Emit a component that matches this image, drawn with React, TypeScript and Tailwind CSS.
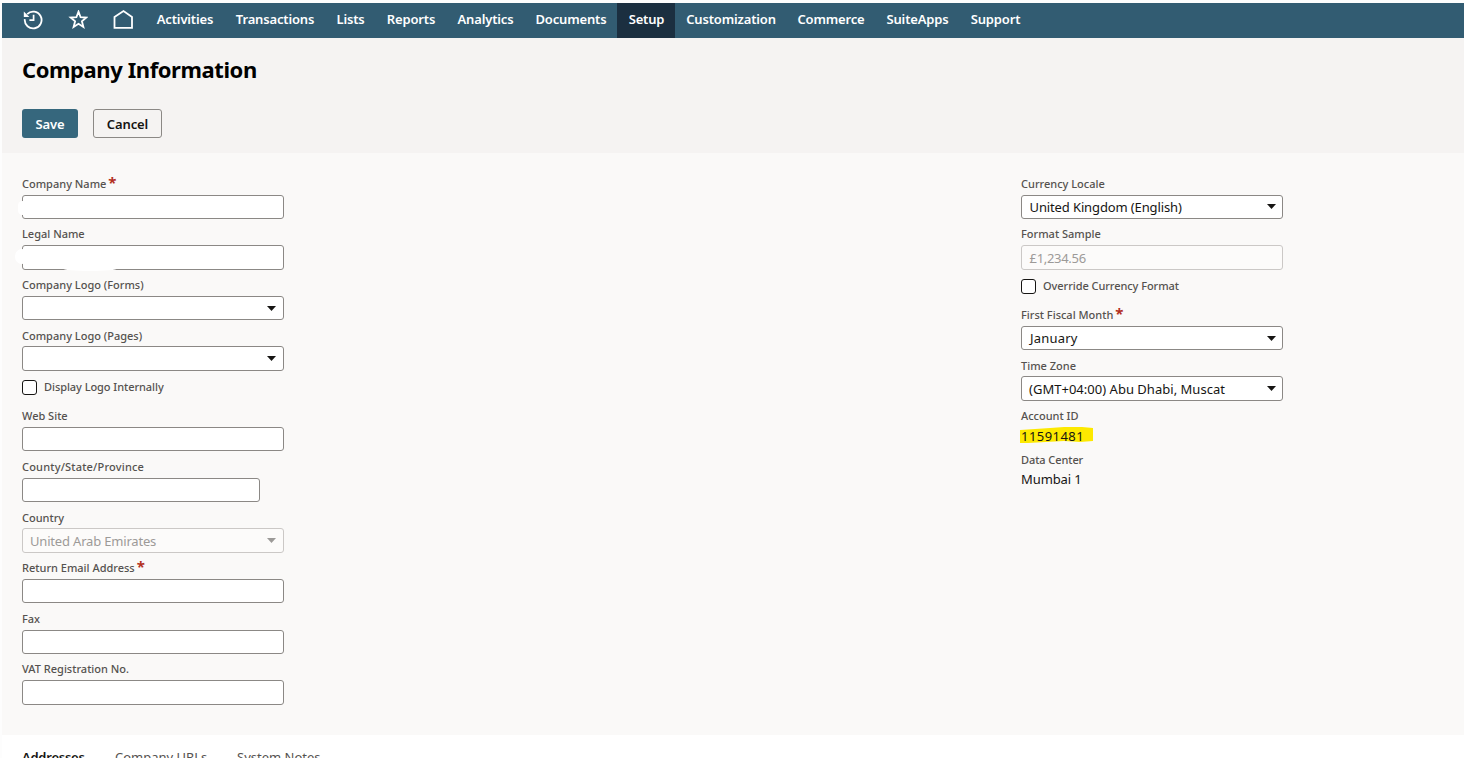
import type { ReactNode } from 'react';
import clsx from 'clsx';

const NAV_ITEMS = [
  { label: 'Activities', width: 'w-[79px]' },
  { label: 'Transactions', width: 'w-[101px]' },
  { label: 'Lists', width: 'w-[50px]' },
  { label: 'Reports', width: 'w-[71px]' },
  { label: 'Analytics', width: 'w-[78px]' },
  { label: 'Documents', width: 'w-[93px]' },
  { label: 'Setup', width: 'w-[58px]', active: true },
  { label: 'Customization', width: 'w-[111px]' },
  { label: 'Commerce', width: 'w-[89px]' },
  { label: 'SuiteApps', width: 'w-[84px]' },
  { label: 'Support', width: 'w-[72px]' },
];

const HistoryIcon = () => (
  <svg className="w-5 h-5" viewBox="0 0 20 20" fill="none" stroke="currentColor" strokeWidth="1.8">
    <path d="M4.2 4.1A8.4 8.4 0 1 1 1.8 9.2" />
    <path d="M0.8 1.6V6.9H6.4Z" fill="currentColor" stroke="none" />
    <path d="M10.6 4.8V10.2H6.4" strokeWidth="1.7" />
  </svg>
);

const StarIcon = () => (
  <svg className="w-5 h-5" viewBox="0 0 20 20" fill="none" stroke="currentColor" strokeWidth="1.8">
    <path d="M10.5 1.6L12.6 7.2L18.3 7.5L13.9 11.2L15.4 17L10.5 13.8L5.6 17L7.1 11.2L2.7 7.5L8.4 7.2Z" />
  </svg>
);

const HomeIcon = () => (
  <svg className="w-5 h-5" viewBox="0 0 20 20" fill="none" stroke="currentColor" strokeWidth="1.8">
    <path d="M1.5 17.9V7L10.5 1.1L19 7V17.9Z" />
  </svg>
);

const Caret = ({ disabled }: { disabled?: boolean }) => (
  <svg className={clsx('w-[9px] h-[5px] shrink-0', disabled ? 'text-[#9c9a98]' : 'text-[#161513]')} viewBox="0 0 9 5">
    <path d="M0 0H9L4.5 5Z" fill="currentColor" />
  </svg>
);

interface FieldProps {
  label: string;
  required?: boolean;
  className?: string;
  labelClass?: string;
  children: ReactNode;
}

const Field = ({ label, required, className, labelClass = 'h-[22px]', children }: FieldProps) => (
  <div className={className}>
    <div className={clsx('flex items-center whitespace-nowrap text-[11px] leading-[20px] font-medium text-[#55524f]', labelClass)}>
      {label}
      {required && <span className="ml-[2px] h-[22px] text-[15px] leading-[18px] font-bold text-[#b3311f]">*</span>}
    </div>
    {children}
  </div>
);

interface BoxProps {
  value?: string;
  select?: boolean;
  disabled?: boolean;
  className?: string;
  textClass?: string;
}

const Box = ({ value, select, disabled, className = 'w-[262px] h-6 px-[7px]', textClass }: BoxProps) => (
  <div
    className={clsx(
      'flex items-center justify-between rounded-[3px] border text-[13px] leading-[22px] whitespace-nowrap',
      disabled ? 'border-[#cbc8c6] bg-[#fcfbfa] text-[#9c9a98]' : 'border-[#8b8885] bg-white text-[#161513]',
      className
    )}
  >
    <span className={textClass}>{value}</span>
    {select && <Caret disabled={disabled} />}
  </div>
);

const Checkbox = ({ label, className }: { label: string; className?: string }) => (
  <div className={clsx('flex h-[15px]', className)}>
    <span className="w-[15px] h-[15px] rounded-[3px] border border-[#161513] bg-white" />
    <span className="ml-[7px] whitespace-nowrap text-[11px] leading-[14px] font-medium tracking-[-0.06px] text-[#55524f]">{label}</span>
  </div>
);

const App = () => {
  return (
    <div className="h-[758px] overflow-hidden bg-[#fdfdfd] pl-[2px] pt-[3px] font-['Noto_Sans',sans-serif]">
      {/* Top navigation */}
      <nav className="flex h-[35px] bg-[#325c72] text-white">
        <div className="flex w-[143px] items-center pl-[21px] pb-[2px] gap-[25px]">
          <HistoryIcon />
          <StarIcon />
          <HomeIcon />
        </div>
        {NAV_ITEMS.map((item) => (
          <div
            key={item.label}
            className={clsx(
              'flex h-full items-center justify-center whitespace-nowrap pb-[2px] pl-px text-[13px] font-semibold tracking-[-0.16px]',
              item.width,
              item.active && 'bg-[#1b2f40]'
            )}
          >
            {item.label}
          </div>
        ))}
      </nav>

      {/* Page title and actions */}
      <header className="h-[115px] bg-[#f5f3f2] pl-5 pt-[15px]">
        <h1 className="text-[22px] leading-8 font-bold tracking-[-0.42px] text-black">Company Information</h1>
        <div className="mt-6 flex gap-[15px] text-[13px] font-semibold tracking-[-0.1px]">
          <button className="h-[29px] w-14 rounded-[3px] bg-[#36677d] pt-[2px] text-white">Save</button>
          <button className="h-[29px] w-[69px] rounded-[3px] border border-[#8b8885] pt-[2px] text-[#161513]">Cancel</button>
        </div>
      </header>

      {/* Form */}
      <main className="flex h-[582px] bg-[#faf9f8] pl-5 pt-5">
        <div className="w-[999px]">
          <Field label="Company Name" required>
            <div className="relative">
              <Box />
              <span className="absolute -left-[4px] top-[6px] h-[14px] w-[9px] rounded-full bg-white" />
            </div>
          </Field>
          <Field label="Legal Name" className="mt-1">
            <div className="relative">
              <Box className="w-[262px] h-[25px] px-[7px]" />
              <span className="absolute -left-[7px] top-[4px] h-[15px] w-[14px] rounded-full bg-white" />
              <span className="absolute left-[41px] top-[21px] h-[5px] w-[54px] rounded-[50%] bg-white" />
            </div>
          </Field>
          <Field label="Company Logo (Forms)" className="mt-1">
            <Box select />
          </Field>
          <Field label="Company Logo (Pages)" className="mt-[6px]" labelClass="h-5">
            <Box select className="w-[262px] h-[25px] px-[7px]" />
          </Field>
          <Checkbox label="Display Logo Internally" className="mt-[9px]" />
          <Field label="Web Site" className="mt-[10px]">
            <Box />
          </Field>
          <Field label="County/State/Province" className="mt-[5px]" labelClass="h-[22px] tracking-[0.19px]">
            <Box className="w-[238px] h-6 px-[7px]" />
          </Field>
          <Field label="Country" className="mt-[6px]" labelClass="h-5">
            <Box value="United Arab Emirates" select disabled className="w-[262px] h-[25px] px-[7px]" textClass="tracking-[-0.18px]" />
          </Field>
          <Field label="Return Email Address" required className="mt-1">
            <Box />
          </Field>
          <Field label="Fax" className="mt-[5px]">
            <Box />
          </Field>
          <Field label="VAT Registration No." className="mt-1">
            <Box className="w-[262px] h-[25px] px-[7px]" />
          </Field>
        </div>

        <div>
          <Field label="Currency Locale">
            <Box
              value="United Kingdom (English)"
              select
              className="w-[262px] h-6 pl-[7.5px] pr-[6px] pb-px"
              textClass="tracking-[-0.12px]"
            />
          </Field>
          <Field label="Format Sample" className="mt-1">
            <Box value="£1,234.56" disabled className="w-[262px] h-[25px] pl-[7.5px] pr-[6px]" textClass="tracking-[-0.3px]" />
          </Field>
          <Checkbox label="Override Currency Format" className="mt-[9px]" />
          <Field label="First Fiscal Month" required className="mt-[10px]">
            <Box value="January" select className="w-[262px] h-6 pl-[8px] pr-[6px]" textClass="-mt-px tracking-[0.2px]" />
          </Field>
          <Field label="Time Zone" className="mt-[6px]" labelClass="h-5">
            <Box
              value="(GMT+04:00) Abu Dhabi, Muscat"
              select
              className="w-[262px] h-[25px] pl-[7px] pr-[6px]"
              textClass="tracking-[0.02px]"
            />
          </Field>
          <Field label="Account ID" className="mt-1">
            <div className="relative h-[18px] text-[13px] leading-[18px] text-[#161513]">
              <svg className="absolute -left-[1px] -top-[1px] h-[18px] w-[74px]" viewBox="0 0 74 18">
                <path d="M0 4L30 2L44 1L62 1L73 2V15L60 16L44 15L26 16L8 17L0 17Z" fill="#fde900" />
              </svg>
              <span className="relative tracking-[0.45px]">11591481</span>
            </div>
          </Field>
          <Field label="Data Center" className="mt-1" labelClass="h-[22px] tracking-[-0.08px]">
            <div className="h-[18px] text-[13px] leading-[16px] tracking-[-0.1px] text-[#161513]">Mumbai 1</div>
          </Field>
        </div>
      </main>

      {/* Subtabs */}
      <div className="flex h-[23px] items-start overflow-hidden bg-white pl-5 pt-[13px] text-[13px] leading-[18px] text-[#55524f]">
        <span className="w-[93px] font-semibold tracking-[-0.25px] text-[#161513]">Addresses</span>
        <span className="w-[122px]">Company URLs</span>
        <span>System Notes</span>
      </div>
    </div>
  );
};

export default App;
